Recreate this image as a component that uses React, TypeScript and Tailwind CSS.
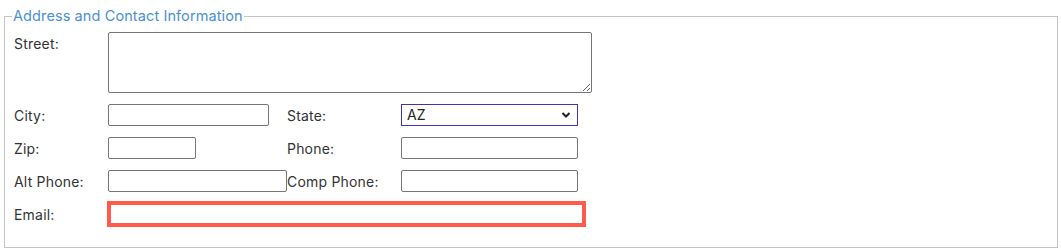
import React from "react";

const inputCls =
  "block h-[22px] border border-[#767676] rounded-[2px] bg-white px-[2px] text-[13px] outline-none";

function Label({ children, w }: { children: React.ReactNode; w: string }) {
  return <div className={`${w} shrink-0 text-[14px] leading-[17px] tracking-[0.2px] text-[#333]`}>{children}</div>;
}

export default function App() {
  return (
    <div className="w-[1061px] h-[251px] bg-white pt-[8px] font-['Inter','Liberation_Sans',sans-serif]">
      <fieldset className="ml-[4px] w-[1054px] h-[240px] border border-[#c4c4c4] pl-[9px] pr-[9px] pt-[8px]">
        <legend className="px-[1px] ml-[-2px] text-[14.5px] leading-[16px] tracking-[0.1px] text-[#4a90d2]">
          Address and Contact Information
        </legend>
        <div className="flex flex-col">
          <div className="flex items-start">
            <div className="w-[94px] shrink-0 pt-[3px] text-[14px] leading-[17px] tracking-[0.2px] text-[#333]">Street:</div>
            <textarea className="block w-[484px] h-[61px] border border-[#767676] rounded-[2px] bg-white outline-none" />
          </div>
          <div className="flex items-center mt-[11px]">
            <Label w="w-[94px]">City:</Label>
            <div className="w-[179px] shrink-0">
              <input className={`${inputCls} w-[161px]`} />
            </div>
            <Label w="w-[114px]">State:</Label>
            <div className="relative w-[177px] h-[22px] border border-[#4433b0] bg-white text-[14px] leading-[20px] text-[#222] pl-[5px]">
              AZ
              <svg className="absolute right-[6px] top-[6px]" width="10" height="8" viewBox="0 0 10 8">
                <path d="M1.5 2 L5 5.5 L8.5 2" fill="none" stroke="#222" strokeWidth="2" />
              </svg>
            </div>
          </div>
          <div className="flex items-center mt-[11px]">
            <Label w="w-[94px]">Zip:</Label>
            <div className="w-[179px] shrink-0">
              <input className={`${inputCls} w-[88px]`} />
            </div>
            <Label w="w-[114px]">Phone:</Label>
            <input className={`${inputCls} w-[177px]`} />
          </div>
          <div className="flex items-center mt-[11px]">
            <Label w="w-[94px]">Alt Phone:</Label>
            <div className="w-[179px] shrink-0">
              <input className={`${inputCls} w-[179px]`} />
            </div>
            <Label w="w-[114px]">Comp Phone:</Label>
            <input className={`${inputCls} w-[177px]`} />
          </div>
          <div className="flex items-center mt-[9px]">
            <Label w="w-[93px]">Email:</Label>
            <input className="block w-[479px] h-[26px] border-4 border-[#ff5a4c] bg-white outline-none" />
          </div>
        </div>
      </fieldset>
    </div>
  );
}
